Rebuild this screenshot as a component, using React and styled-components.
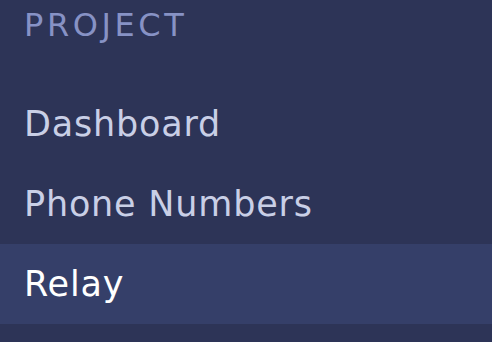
import React from 'react';
import styled, { createGlobalStyle } from 'styled-components';

const GlobalStyle = createGlobalStyle`
  html, body {
    margin: 0;
    padding: 0;
    background: #2d3457;
  }
`;

const Sidebar = styled.nav`
  min-height: 100vh;
  background: #2d3457;
  font-family: "DejaVu Sans", "Noto Sans", sans-serif;
  display: flex;
  flex-direction: column;
`;

const SectionTitle = styled.div`
  height: 84px;
  padding: 0 24px;
  line-height: 50px;
  font-size: 32px;
  letter-spacing: 3.6px;
  text-transform: uppercase;
  color: #8792c5;
`;

const NavItem = styled.a`
  display: block;
  height: 80px;
  line-height: 80px;
  padding: 0 24px;
  font-size: 35px;
  letter-spacing: 0.8px;
  text-decoration: none;
  color: ${props => props.active ? '#ffffff' : '#c9cfe6'};
  background: ${props => props.active ? '#353f69' : 'transparent'};
  cursor: pointer;
`;

const items = ['Dashboard', 'Phone Numbers', 'Relay'];

export default function App() {
  return (
    <>
      <GlobalStyle />
      <Sidebar>
        <SectionTitle>Project</SectionTitle>
        {items.map(item => (
          <NavItem key={item} active={item === 'Relay'}>
            {item}
          </NavItem>
        ))}
      </Sidebar>
    </>
  );
}
